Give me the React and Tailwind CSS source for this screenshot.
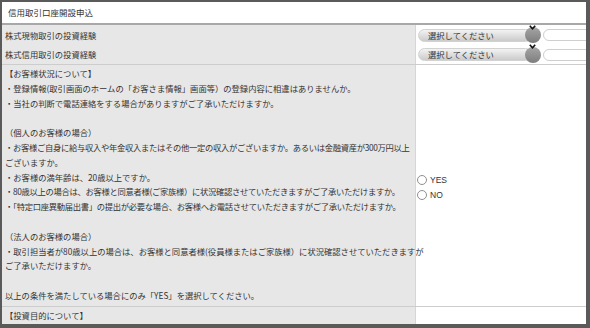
import React from "react";

const jp = { fontFamily: '"Noto Sans CJK JP", "Noto Sans", sans-serif' };

function SelectBox() {
  return (
    <div className="flex items-center gap-[2px]">
      <div className="relative flex h-[13px] w-[123px] shrink-0 items-center">
        <div className="flex h-[13px] w-[114px] items-center rounded-full border border-[#d2d2d2] bg-gradient-to-b from-[#f3f3f3] to-[#cbcbcb] pl-[9px] text-[8.3px] text-[#333]">
          選択してください
        </div>
        <div className="absolute right-0 top-[-1.5px] h-[16px] w-[16px] rounded-full bg-gradient-to-b from-[#a6a6a6] to-[#7d7d7d]" />
        <svg className="absolute right-[5px] top-[-4px]" width="7" height="5" viewBox="0 0 7 5">
          <path d="M0.8 0.8 L3.5 3.8 L6.2 0.8" fill="none" stroke="#111" strokeWidth="1.6" />
        </svg>
      </div>
      <div className="h-[12px] w-[60px] shrink-0 rounded-full border border-[#cfcfcf] bg-white" />
    </div>
  );
}

function Radio({ label }) {
  return (
    <label className="flex h-[15px] items-center gap-[3px]">
      <span className="h-[10px] w-[10px] rounded-full border border-[#8f8f8f] bg-white" />
      <span className="text-[8.5px] text-[#333]" style={{ fontFamily: '"Liberation Sans", Arial, sans-serif' }}>{label}</span>
    </label>
  );
}

const lines = [
  { t: "【お客様状況について】" },
  { t: "・登録情報(取引画面のホームの「お客さま情報」画面等）の登録内容に相違はありませんか。" },
  { t: "・当社の判断で電話連絡をする場合がありますがご了承いただけますか。" },
  { t: "" },
  { t: "（個人のお客様の場合）" },
  { t: "・お客様ご自身に給与収入や年金収入またはその他一定の収入がございますか。あるいは金融資産が300万円以上", tight: true },
  { t: "ございますか。" },
  { t: "・お客様の満年齢は、20歳以上ですか。" },
  { t: "・80歳以上の場合は、お客様と同意者様(ご家族様）に状況確認させていただきますがご了承いただけますか。", tight: true },
  { t: "・「特定口座異動届出書」の提出が必要な場合、お客様へお電話させていただきますがご了承いただけますか。", tight: true },
  { t: "" },
  { t: "（法人のお客様の場合）" },
  { t: "・取引担当者が80歳以上の場合は、お客様と同意者様(役員様またはご家族様）に状況確認させていただきますが" },
  { t: "ご了承いただけますか。" },
  { t: "" },
  { t: "以上の条件を満たしている場合にのみ「YES」を選択してください。" },
];

export default function App() {
  return (
    <div className="h-[328px] w-[590px] overflow-hidden bg-[#5a5a5a] pb-[4px] pl-[2px] pr-[4px] pt-[2px]" style={jp}>
      <div className="flex h-full flex-col overflow-hidden bg-white text-[#333]">
        <div className="flex h-[23px] shrink-0 items-center border-b-[2px] border-[#a8a8a8] pl-[6px] text-[8.5px]">
          信用取引口座開設申込
        </div>

        <div className="flex h-[20px] shrink-0">
          <div className="flex w-[413px] shrink-0 items-center bg-[#e7e7e7] pl-[3px] text-[8.3px]">株式現物取引の投資経験</div>
          <div className="flex min-w-0 flex-1 items-center border-l border-[#d6d6d6] pl-[2px]">
            <SelectBox />
          </div>
        </div>
        <div className="flex h-[20px] shrink-0 border-b border-[#cdcdcd]">
          <div className="flex w-[413px] shrink-0 items-center bg-[#e7e7e7] pl-[3px] text-[8.3px]">株式信用取引の投資経験</div>
          <div className="flex min-w-0 flex-1 items-center border-l border-[#d6d6d6] pl-[2px]">
            <SelectBox />
          </div>
        </div>

        <div className="flex shrink-0 border-b border-[#cdcdcd]">
          <div className="w-[413px] shrink-0 bg-[#e7e7e7] pb-[3px] pl-[3px] pt-[1px] text-[8.3px] leading-[14.8px]">
            {lines.map((l, i) => (
              <div key={i} className={l.tight ? "h-[14.8px] whitespace-nowrap tracking-[-0.3px]" : "h-[14.8px] whitespace-nowrap"}>
                {l.t}
              </div>
            ))}
          </div>
          <div className="flex flex-1 flex-col justify-center border-l border-[#d6d6d6] pl-[1px] pt-[4px]">
            <Radio label="YES" />
            <Radio label="NO" />
          </div>
        </div>

        <div className="flex flex-1">
          <div className="w-[413px] shrink-0 bg-[#e7e7e7] pl-[3px] pt-[1px] text-[8.3px] leading-[14.8px]">【投資目的について】</div>
          <div className="flex-1 border-l border-[#d6d6d6]" />
        </div>
      </div>
    </div>
  );
}
